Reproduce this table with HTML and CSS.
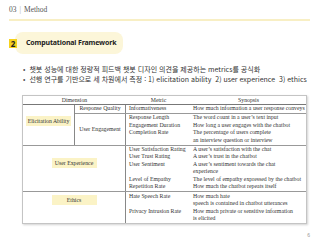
FILE: index.html
```html
<!DOCTYPE html>
<html lang="ko">
<head>
<meta charset="utf-8">
<link rel="stylesheet" href="styles.css">
</head>
<body>
<div class="page">
  <div class="crumb"><span>03</span><span class="sep">|</span><span>Method</span></div>
  <div class="rule"></div>
  <div class="section-title">
    <span class="num">2</span>
    <span class="pill">Computational Framework</span>
  </div>
  <ul class="bullets">
    <li>챗봇 성능에 대한 정량적 피드백 챗봇 디자인 의견을 제공하는 metrics를 공식화</li>
    <li>선행 연구를 기반으로 세 차원에서 측정 : 1) elicitation ability&nbsp; 2) user experience&nbsp; 3) ethics</li>
  </ul>
  <div class="table">
    <div class="thead">
      <div class="th">Dimension</div>
      <div class="th">Metric</div>
      <div class="th">Synopsis</div>
    </div>
    <div class="group">
      <div class="dim dim-elic"><span class="tag">Elicitation Ability</span></div>
      <div class="subs">
        <div class="sub">
          <div class="subdim">Response Quality</div>
          <div class="rows">
            <div>Informativeness</div><div>How much information a user response conveys</div>
          </div>
        </div>
        <div class="sub">
          <div class="subdim">User Engagement</div>
          <div class="rows">
            <div>Response Length</div><div>The word count in a user’s text input</div>
            <div>Engagement Duration</div><div>How long a user engages with the chatbot</div>
            <div>Completion Rate</div><div>The percentage of users complete<br>an interview question or interview</div>
          </div>
        </div>
      </div>
    </div>
    <div class="group">
      <div class="dim wide dim-ux"><span class="tag">User Experience</span></div>
      <div class="rows">
        <div>User Satisfaction Rating</div><div>A user’s satisfaction with the chat</div>
        <div>User Trust Rating</div><div>A user’s trust in the chatbot</div>
        <div>User Sentiment</div><div>A user’s sentiment towards the chat<br>experience</div>
        <div>Level of Empathy</div><div>The level of empathy expressed by the chatbot</div>
        <div>Repetition Rate</div><div>How much the chatbot repeats itself</div>
      </div>
    </div>
    <div class="group last">
      <div class="dim wide dim-eth"><span class="tag">Ethics</span></div>
      <div class="rows">
        <div>Hate Speech Rate</div><div>How much hate<br>speech is contained in chatbot utterances</div>
        <div>Privacy Intrusion Rate</div><div>How much private or sensitive information<br>is elicited</div>
      </div>
    </div>
  </div>
  <div class="pageno">6</div>
</div>
</body>
</html>
```
FILE: styles.css
```css
html, body {
  margin: 0;
  padding: 0;
  background: #ffffff;
}
.page {
  width: 320px;
  height: 240px;
  box-sizing: border-box;
  padding: 5px 10px 0 9px;
  overflow: hidden;
}
.crumb {
  font-family: "Liberation Serif", serif;
  font-size: 7.5px;
  line-height: 10px;
  color: #555;
  display: flex;
  gap: 3px;
}
.crumb .sep {
  color: #aaa;
}
.rule {
  margin-top: 4px;
  height: 2px;
  background: #f8efc4;
}
.section-title {
  margin-top: 11px;
  display: flex;
  align-items: center;
}
.num {
  position: relative;
  z-index: 1;
  width: 8px;
  height: 9px;
  background: #f6d21c;
  color: #222;
  font-family: "Noto Sans", sans-serif;
  font-weight: 700;
  font-size: 8px;
  line-height: 9px;
  text-align: center;
}
.pill {
  margin-left: -2px;
  height: 22px;
  width: 108px;
  box-sizing: border-box;
  padding-left: 11px;
  border-radius: 8px;
  background: #fcf6d9;
  font-family: "Noto Sans", sans-serif;
  font-weight: 700;
  font-size: 7px;
  letter-spacing: -0.15px;
  line-height: 22px;
  color: #222;
  white-space: nowrap;
}
.bullets {
  list-style: none;
  margin: 10px 0 0 0;
  padding: 0 0 0 14px;
  font-family: "Noto Sans CJK KR", "Noto Sans", sans-serif;
  font-size: 7px;
  line-height: 10px;
  color: #333;
}
.bullets li {
  display: flex;
  gap: 4px;
  white-space: nowrap;
}
.bullets li::before {
  content: "•";
  color: #555;
}
.table {
  margin: 11px 3px 0 13px;
  border: 1px solid #c4c4c4;
  box-shadow: 1px 1px 2px rgba(0, 0, 0, 0.18);
  font-family: "Liberation Serif", serif;
  font-size: 5.8px;
  line-height: 7.5px;
  color: #333;
}
.thead {
  display: grid;
  grid-template-columns: 103px 65px 1fr;
  height: 8px;
  border-bottom: 1px solid #777;
}
.th {
  text-align: center;
  line-height: 8px;
}
.group {
  display: flex;
  border-bottom: 1px solid #999;
}
.group.last {
  border-bottom: none;
}
.dim {
  width: 52px;
  flex: none;
  box-sizing: border-box;
  border-right: 1px solid #888;
  display: flex;
  align-items: center;
  justify-content: center;
}
.dim.wide {
  width: 103px;
}
.dim-elic {
  padding-bottom: 7px;
}
.dim-ux {
  padding-bottom: 10px;
}
.dim-eth {
  padding-bottom: 15px;
}
.tag {
  display: inline-block;
  min-width: 45px;
  height: 10px;
  line-height: 10px;
  padding: 0 2px;
  box-sizing: border-box;
  background: #fbf3c6;
  text-align: center;
  white-space: nowrap;
}
.subs {
  flex: 1;
  display: flex;
  flex-direction: column;
}
.sub {
  display: flex;
  border-bottom: 1px solid #999;
}
.sub:last-child {
  border-bottom: none;
}
.subdim {
  width: 51px;
  flex: none;
  box-sizing: border-box;
  border-right: 1px solid #888;
  display: flex;
  align-items: center;
  justify-content: center;
  white-space: nowrap;
}
.rows {
  flex: 1;
  display: grid;
  grid-template-columns: 65px 1fr;
  align-content: start;
  padding: 0.3px 0 0.3px 0;
  white-space: nowrap;
}
.rows > div:nth-child(odd) {
  padding-left: 3px;
}
.rows > div:nth-child(even) {
  padding-left: 2px;
}
.pageno {
  margin-top: 8px;
  text-align: right;
  padding-right: 0;
  font-family: "Liberation Sans", sans-serif;
  font-size: 5px;
  color: #999;
}
```
